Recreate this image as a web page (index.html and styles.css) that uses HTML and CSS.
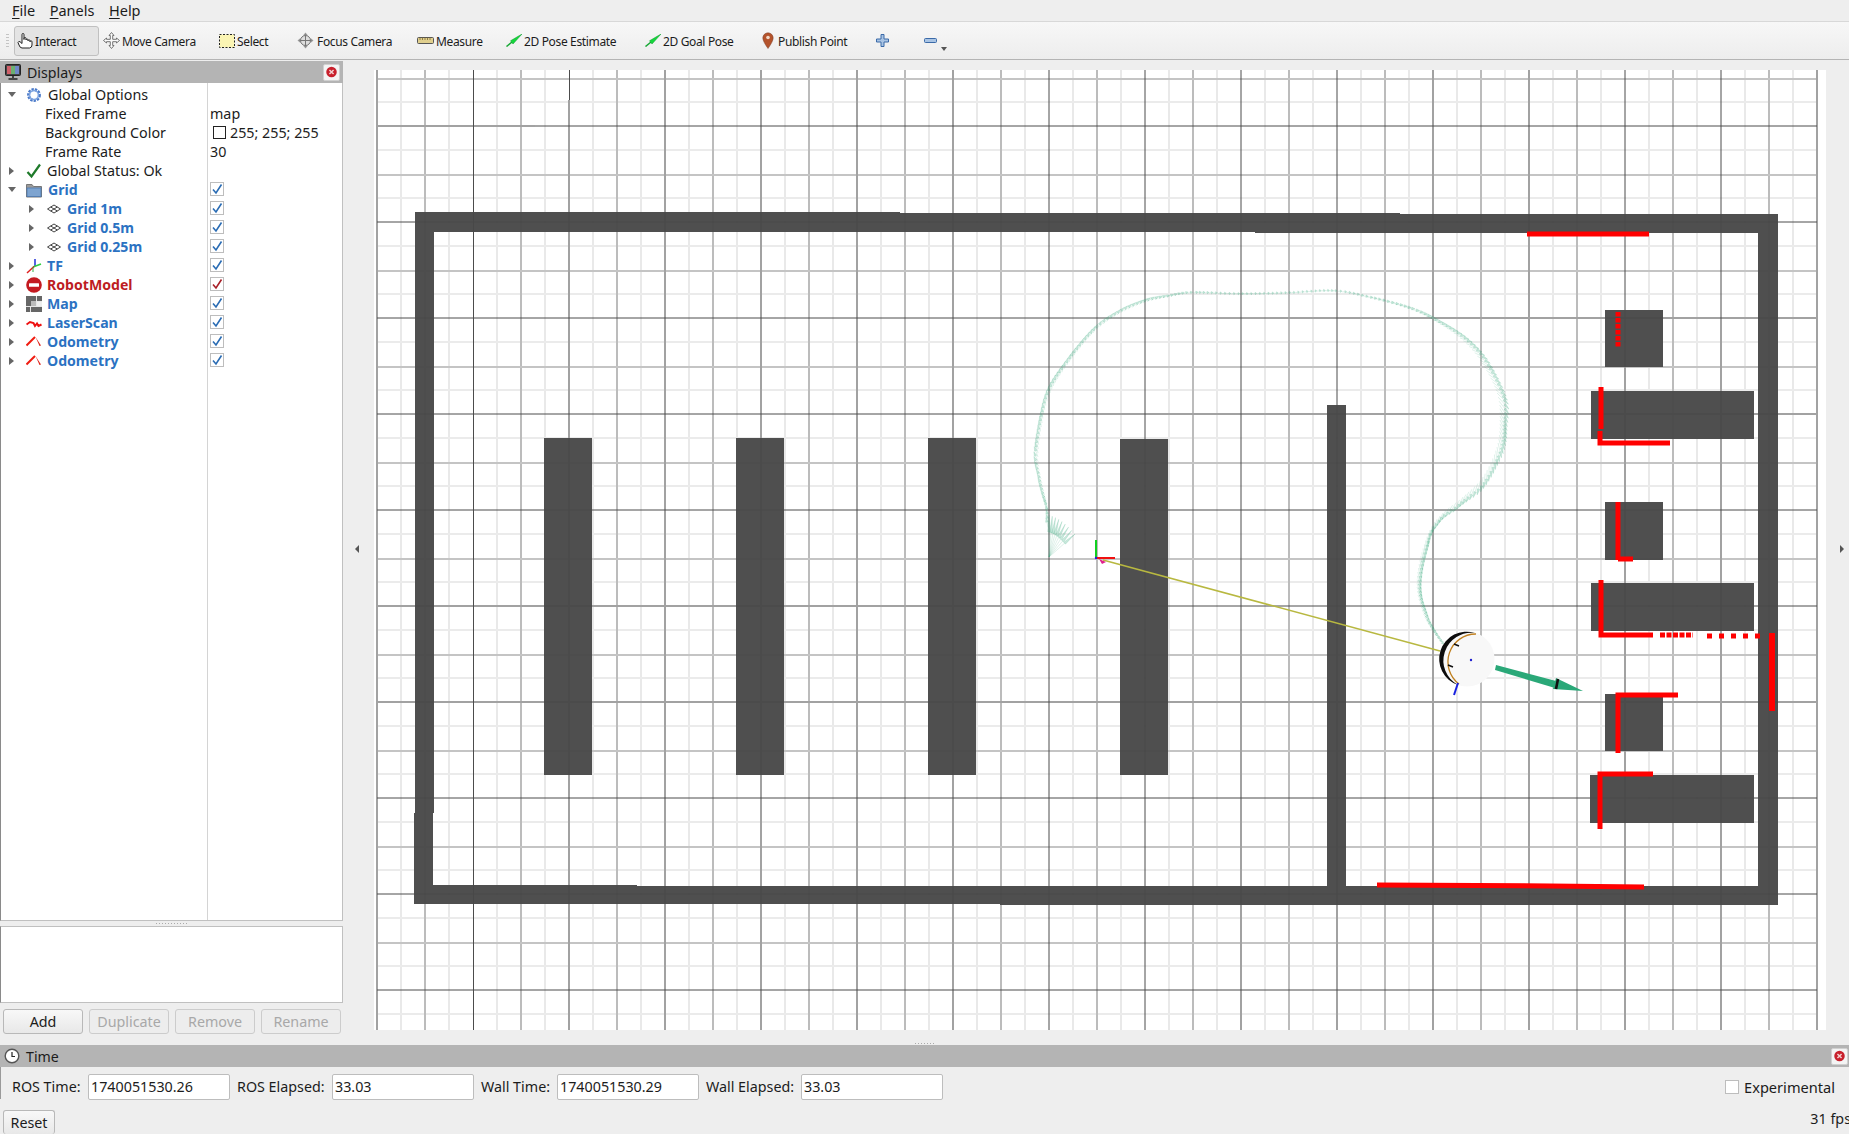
FILE: index.html
```html
<!DOCTYPE html>
<html lang="en">
<head>
<meta charset="utf-8">
<title>RViz</title>
<link rel="stylesheet" href="styles.css">
</head>
<body>
<svg class="defs" width="0" height="0" aria-hidden="true">
  <symbol id="i-check" viewBox="0 0 14 14"><path d="M3 7.500 6 11 11.500 2.500" fill="none" stroke="currentColor" stroke-width="1.600"/></symbol>
  <symbol id="i-close" viewBox="0 0 16 16"><circle cx="8" cy="8" r="5.600" fill="#c8202c"/><path d="M5.800 5.800 10.200 10.200M10.200 5.800 5.800 10.200" stroke="#f3d0d0" stroke-width="1.600"/></symbol>
  <symbol id="i-grid" viewBox="0 0 16 16"><path d="M1.500 8 8 4l6.500 4L8 12ZM4.700 6 11.300 10M11.300 6 4.700 10" fill="#fff" stroke="#444" stroke-width="1"/></symbol>
  <symbol id="i-odom" viewBox="0 0 16 16"><path d="M.5 11.500 9 3" stroke="#f01c10" stroke-width="2" fill="none"/><path d="M9.500 3l5.500 8.500-1.500.5Z" fill="#e02018"/></symbol>
</svg>

<nav class="menubar">
  <span><u>F</u>ile</span>
  <span><u>P</u>anels</span>
  <span><u>H</u>elp</span>
</nav>

<div class="toolbar">
  <span class="grip"></span>
  <div class="tool tool-interact active">
    <svg width="17" height="17" viewBox="0 0 17 17"><path d="M5 9V2.500a1 1 0 0 1 2 0V7.500V6.500a1 1 0 0 1 2 0V8a1 1 0 0 1 2 0v.8a1 1 0 0 1 2 0v1a1 1 0 0 1 2 0V13q0 2.500-2.500 3H5Q3 16 2 13L1 10.500q.5-1.500 2-.8L5 11.500Z" fill="#fff" stroke="#222" stroke-width="1"/></svg>
    <span>Interact</span>
  </div>
  <div class="tool tool-move">
    <svg width="17" height="17" viewBox="0 0 17 17"><path d="M8.500 .5 11 3.500H9.700V7.300H13.500V6L16.500 8.500 13.500 11V9.700H9.700V13.500H11L8.500 16.500 6 13.500H7.300V9.700H3.500V11L.5 8.500 3.500 6V7.300H7.300V3.500H6Z" fill="#fafafa" stroke="#666" stroke-width=".9"/></svg>
    <span>Move Camera</span>
  </div>
  <div class="tool tool-select">
    <svg width="16" height="14" viewBox="0 0 16 14"><rect x=".5" y=".5" width="15" height="13" fill="#fbf5b4" stroke="#222" stroke-dasharray="2 1.500"/></svg>
    <span>Select</span>
  </div>
  <div class="tool tool-focus">
    <svg width="17" height="17" viewBox="0 0 17 17"><path d="M8.500.5 11 3.500H6ZM8.500 16.500 6 13.500H11ZM.5 8.500 3.500 6V11ZM16.500 8.500 13.500 11V6Z" fill="#999"/><circle cx="8.500" cy="8.500" r="5" fill="#ddd" stroke="#777"/><path d="M8.500 2.500V14.500M2.500 8.500H14.500" stroke="#777"/></svg>
    <span>Focus Camera</span>
  </div>
  <div class="tool tool-measure">
    <svg width="17" height="8" viewBox="0 0 17 8"><rect x=".5" y=".5" width="16" height="6" rx="1" fill="#e0cf8e" stroke="#555"/><path d="M3 .5V3M5.500.5V3M8 .5V3M10.500.5V3M13 .5V3" stroke="#7d6b30" stroke-width=".8"/></svg>
    <span>Measure</span>
  </div>
  <div class="tool tool-pose">
    <svg width="16" height="13" viewBox="0 0 16 13"><path d="M.5 12.500 6 8" stroke="#16a834" stroke-width="1.500"/><path d="M16 0 4.500 6.800 7 10Z" fill="#14d83c" stroke="#0c9a2a" stroke-width=".5"/></svg>
    <span>2D Pose Estimate</span>
  </div>
  <div class="tool tool-goal">
    <svg width="16" height="13" viewBox="0 0 16 13"><path d="M.5 12.500 6 8" stroke="#16a834" stroke-width="1.500"/><path d="M16 0 4.500 6.800 7 10Z" fill="#14d83c" stroke="#0c9a2a" stroke-width=".5"/></svg>
    <span>2D Goal Pose</span>
  </div>
  <div class="tool tool-point">
    <svg width="12" height="17" viewBox="0 0 12 17"><path d="M6 16.500Q1 9.500.8 6a5.200 5.200 0 0 1 10.400 0Q11 9.500 6 16.500Z" fill="#b4532c" stroke="#7a3a22" stroke-width=".5"/><circle cx="6" cy="5.500" r="1.800" fill="#f0d8c8"/></svg>
    <span>Publish Point</span>
  </div>
  <div class="tool tool-plus">
    <svg width="13" height="13" viewBox="0 0 13 13"><path d="M5 .5H8V5H12.500V8H8V12.500H5V8H.5V5H5Z" fill="#a9c4e4" stroke="#3b6aa8"/></svg>
  </div>
  <div class="tool tool-minus">
    <svg width="13" height="5" viewBox="0 0 13 5"><rect x=".5" y=".5" width="12" height="4" rx="1" fill="#a9c4e4" stroke="#3b6aa8"/></svg>
    <i class="menu-caret"></i>
  </div>
</div>

<div class="workspace">
  <aside class="displays">
    <header class="dock-title">
      <svg width="16" height="16" viewBox="0 0 16 16"><rect x=".5" y=".5" width="15" height="11" rx="1" fill="#444" stroke="#222"/><rect x="2" y="2" width="4" height="8" fill="#d0606a"/><rect x="6" y="2" width="4" height="8" fill="#6cb070"/><rect x="10" y="2" width="4" height="8" fill="#7088c8"/><path d="M8 12V14M3.500 15H12.500" stroke="#222" stroke-width="1.500"/></svg>
      <span>Displays</span>
      <button class="dock-close"><svg width="16" height="16"><use href="#i-close"/></svg></button>
    </header>

    <div class="tree">
      <div class="row">
        <div class="name"><i class="caret down"></i>
          <svg class="ico" width="16" height="16" viewBox="0 0 16 16"><circle cx="8" cy="8" r="5.400" fill="none" stroke="#4878c8" stroke-width="3" stroke-dasharray="2.200 1"/><circle cx="8" cy="8" r="4.500" fill="none" stroke="#7ea4e0" stroke-width="1.500"/></svg>
          <span class="lbl">Global Options</span></div>
        <div class="val"></div>
      </div>
      <div class="row"><div class="name prop">Fixed Frame</div><div class="val">map</div></div>
      <div class="row"><div class="name prop">Background Color</div><div class="val"><i class="swatch"></i>255; 255; 255</div></div>
      <div class="row"><div class="name prop">Frame Rate</div><div class="val">30</div></div>
      <div class="row">
        <div class="name"><i class="caret"></i>
          <svg class="ico" width="16" height="16" viewBox="0 0 16 16"><path d="M1.500 9 5.500 13.500 14 1.500" fill="none" stroke="#1e7a2a" stroke-width="2.200"/></svg>
          <span class="lbl">Global Status: Ok</span></div>
        <div class="val"></div>
      </div>
      <div class="row on">
        <div class="name"><i class="caret down"></i>
          <svg class="ico" width="16" height="16" viewBox="0 0 16 16"><path d="M.5 2.500H6L7.500 4.500H15.500V15H.5Z" fill="#9a9a9a" stroke="#777"/><rect x="1" y="6" width="14" height="8.500" fill="#7ea4d0" stroke="#4a78b0" stroke-width=".8"/></svg>
          <span class="lbl">Grid</span></div>
        <div class="val"><label class="cb"><svg width="14" height="14"><use href="#i-check"/></svg></label></div>
      </div>
      <div class="row on child">
        <div class="name"><i class="caret"></i><svg class="ico" width="16" height="16"><use href="#i-grid"/></svg><span class="lbl">Grid 1m</span></div>
        <div class="val"><label class="cb"><svg width="14" height="14"><use href="#i-check"/></svg></label></div>
      </div>
      <div class="row on child">
        <div class="name"><i class="caret"></i><svg class="ico" width="16" height="16"><use href="#i-grid"/></svg><span class="lbl">Grid 0.5m</span></div>
        <div class="val"><label class="cb"><svg width="14" height="14"><use href="#i-check"/></svg></label></div>
      </div>
      <div class="row on child">
        <div class="name"><i class="caret"></i><svg class="ico" width="16" height="16"><use href="#i-grid"/></svg><span class="lbl">Grid 0.25m</span></div>
        <div class="val"><label class="cb"><svg width="14" height="14"><use href="#i-check"/></svg></label></div>
      </div>
      <div class="row on">
        <div class="name"><i class="caret"></i>
          <svg class="ico" width="16" height="16" viewBox="0 0 16 16"><path d="M9 8V1" stroke="#2030d8" stroke-width="1.500"/><path d="M7 9 15 6" stroke="#30d040" stroke-width="1.500"/><path d="M8 8.500 1 15" stroke="#e02020" stroke-width="1.500"/><path d="M7 9V14" stroke="#30b040" stroke-width="1"/></svg>
          <span class="lbl">TF</span></div>
        <div class="val"><label class="cb"><svg width="14" height="14"><use href="#i-check"/></svg></label></div>
      </div>
      <div class="row on err">
        <div class="name"><i class="caret"></i>
          <svg class="ico" width="16" height="16" viewBox="0 0 16 16"><circle cx="8" cy="8" r="7.800" fill="#c41a20"/><rect x="3" y="6.300" width="10" height="3.400" rx=".5" fill="#fff"/></svg>
          <span class="lbl">RobotModel</span></div>
        <div class="val"><label class="cb"><svg width="14" height="14"><use href="#i-check"/></svg></label></div>
      </div>
      <div class="row on">
        <div class="name"><i class="caret"></i>
          <svg class="ico" width="16" height="16" viewBox="0 0 16 16"><rect x="0" y="0" width="16" height="16" fill="#e6e6e6"/><path d="M0 0H10V5H5V10H0ZM11 0H16V5H11ZM5 11H16V16H5ZM0 11H4V16H0Z" fill="#666"/><path d="M5 5H10V10H5Z" fill="#bbb"/><path d="M11 6H16V10H11Z" fill="#eee"/></svg>
          <span class="lbl">Map</span></div>
        <div class="val"><label class="cb"><svg width="14" height="14"><use href="#i-check"/></svg></label></div>
      </div>
      <div class="row on">
        <div class="name"><i class="caret"></i>
          <svg class="ico" width="16" height="16" viewBox="0 0 16 16"><path d="M.5 9.500 4 7 7.500 8 9 11 11 8.500 12.500 11 15.500 9.500" fill="none" stroke="#ee1010" stroke-width="2"/></svg>
          <span class="lbl">LaserScan</span></div>
        <div class="val"><label class="cb"><svg width="14" height="14"><use href="#i-check"/></svg></label></div>
      </div>
      <div class="row on">
        <div class="name"><i class="caret"></i><svg class="ico" width="16" height="16"><use href="#i-odom"/></svg><span class="lbl">Odometry</span></div>
        <div class="val"><label class="cb"><svg width="14" height="14"><use href="#i-check"/></svg></label></div>
      </div>
      <div class="row on">
        <div class="name"><i class="caret"></i><svg class="ico" width="16" height="16"><use href="#i-odom"/></svg><span class="lbl">Odometry</span></div>
        <div class="val"><label class="cb"><svg width="14" height="14"><use href="#i-check"/></svg></label></div>
      </div>
    </div>

    <div class="grip-h"></div>
    <div class="help-box"></div>

    <div class="dock-buttons">
      <button class="btn">Add</button>
      <button class="btn off">Duplicate</button>
      <button class="btn off">Remove</button>
      <button class="btn off">Rename</button>
    </div>
  </aside>

  <div class="view">
    <i class="side-arrow left"></i>
    <svg class="scene" width="1452" height="960" viewBox="374 70 1452 960">
      <defs>
        <pattern id="v-light" x="377" y="70" width="48" height="960" patternUnits="userSpaceOnUse"><rect x="23" width="2" height="960" fill="#e9e9e9"/></pattern>
        <pattern id="v-mid" x="377" y="70" width="96" height="960" patternUnits="userSpaceOnUse"><rect x="47" width="2" height="960" fill="#bcbcbc"/></pattern>
        <pattern id="h-light" x="377" y="78" width="1441" height="48" patternUnits="userSpaceOnUse"><rect y="23" width="1441" height="2" fill="#ebebeb"/></pattern>
        <pattern id="h-mid" x="377" y="78" width="1441" height="96" patternUnits="userSpaceOnUse"><rect y="0" width="1441" height="2" fill="#c4c4c4"/></pattern>
      </defs>
      <rect x="374" y="70" width="1452" height="960" fill="#fff"/>
      <rect x="377" y="70" width="1441" height="960" fill="url(#v-light)"/>
      <rect x="377" y="78" width="1441" height="937" fill="url(#h-light)"/>
      <rect x="377" y="70" width="1441" height="960" fill="url(#v-mid)"/>
      <rect x="377" y="78" width="1441" height="937" fill="url(#h-mid)"/>

      <path class="major-g" d="M377 70V1030M569 100V1030M665 70V1030M761 70V1030M857 70V1030M953 70V1030M1433 70V1030M1529 70V1030M1625 350V1030M1721 320V1030M1817 70V1030M1337 620V1030M1241 650V1030"/>
      <path class="major-g" d="M377 126H535M1270 318H1817M1100 414H1817M1330 510H1540M377 606H1140M377 702H1817"/>
      <path class="major-d" d="M473.500 70V1030M569.500 70V100M1049 70V1030M1145 70V1030M1241 70V650M1337 70V620M1625 70V350M1721 70V320"/>
      <path class="major-d" d="M535 126H1817M377 222H1817M377 318H1270M377 414H1100M377 510H1330M1540 510H1817M1140 606H1817M377 798H1817M377 894H1817M377 990H1817"/>

      <g class="map" shape-rendering="crispEdges">
        <path fill-rule="evenodd" d="M415 212H900V213H1400V214H1778V905H1000V904H414V813H415ZM434 232V813H433V885H637V886H1758V233H1255V232Z"/>
        <rect x="544" y="438" width="48" height="337"/>
        <rect x="736" y="438" width="48" height="337"/>
        <rect x="928" y="438" width="48" height="337"/>
        <rect x="1120" y="439" width="48" height="336"/>
        <rect x="1327" y="405" width="19" height="481"/>
        <rect x="1605" y="310" width="58" height="57"/>
        <rect x="1591" y="391" width="163" height="48"/>
        <rect x="1605" y="502" width="58" height="58"/>
        <rect x="1591" y="583" width="163" height="48"/>
        <rect x="1605" y="694" width="58" height="57"/>
        <rect x="1590" y="775" width="164" height="48"/>
      </g>

      <g class="scan">
        <path d="M1527 234H1649"/>
        <path d="M1618 312V347" stroke-dasharray="4.500 1.500"/>
        <path d="M1601 387V429M1600 431V443H1670"/>
        <path d="M1618 502V560M1618 559H1633"/>
        <path d="M1601 580V635H1653"/>
        <path d="M1660 635H1693" stroke-dasharray="5 1.500"/>
        <path d="M1707 636H1760" stroke-dasharray="5 7"/>
        <path class="scan-wide" d="M1772 633V711"/>
        <path d="M1678 695H1618V753"/>
        <path d="M1653 774H1600V829"/>
        <path d="M1377 885 1550 886 1644 887"/>
      </g>

      <path class="tf-line" d="M1103 560 1440 651"/>
      <path d="M1096 558V540" stroke="#10d020" stroke-width="2"/>
      <path d="M1096 558H1115" stroke="#f01010" stroke-width="2"/>
      <path d="M1099 559 1106 562 1102 564Z" fill="#e0208c"/>
      <circle cx="1096" cy="558" r="1.200" fill="#2020e0"/>

      <g id="odom-arrows"></g>

      <circle cx="1467" cy="659" r="27.500" fill="#f8f8f8"/>
      <path d="M1477 633A27.200 27.200 0 0 0 1460 685A27.800 27.800 0 0 1 1477 633Z" fill="#0c0c0c" transform="translate(-2 0)"/>
      <path d="M1476 634A27.800 27.800 0 0 0 1459 684" fill="none" stroke="#c08020" stroke-width="1.300"/>
      <path d="M1454 644 1459 646M1448 665 1453 667" stroke="#111" stroke-width="1.500"/>
      <circle cx="1471" cy="660" r="1.200" fill="#2020d0"/>
      <path d="M1458 683 1454 695" stroke="#1820e0" stroke-width="2"/>
      <path d="M1496 665 1556 681 1555 688 1495 670Z" fill="#2aa878"/>
      <path d="M1556 678 1583 691 1553 689Z" fill="#2aa878"/>
      <path d="M1558 679 1556 689" stroke="#111" stroke-width="2.600"/>
    </svg>
    <i class="side-arrow right"></i>
  </div>
</div>

<div class="grip-bottom"></div>

<section class="time-panel">
  <header class="dock-title time-title">
    <svg width="16" height="16" viewBox="0 0 16 16"><circle cx="8" cy="8" r="6.800" fill="#fff" stroke="#555" stroke-width="1.400"/><path d="M8 4V8.500H11" fill="none" stroke="#222" stroke-width="1.200"/></svg>
    <span>Time</span>
    <button class="dock-close"><svg width="16" height="16"><use href="#i-close"/></svg></button>
  </header>
  <div class="time-row">
    <span class="t-label">ROS Time:</span><span class="field">1740051530.26</span>
    <span class="t-label">ROS Elapsed:</span><span class="field">33.03</span>
    <span class="t-label">Wall Time:</span><span class="field">1740051530.29</span>
    <span class="t-label">Wall Elapsed:</span><span class="field">33.03</span>
    <span class="experimental"><i class="swatch big"></i>Experimental</span>
  </div>
  <div class="status-row">
    <button class="btn reset">Reset</button>
    <span class="fps">31 fps</span>
  </div>
</section>
<script src="scene.js"></script>
</body>
</html>
```

FILE: styles.css
```css
* { box-sizing: border-box; }
html, body { margin: 0; height: 100%; }
body {
  width: 1849px;
  height: 1134px;
  overflow: hidden;
  background: #eeeeee;
  color: #1c1c1c;
  font-family: "Noto Sans", "Open Sans", sans-serif;
  font-size: 14.3px;
}
.defs { position: absolute; }
u { text-underline-offset: 2px; }

.menubar {
  height: 22px;
  display: flex;
  align-items: center;
  gap: 14.5px;
  padding: 0 0 2px 12px;
  background: #eeeeee;
  font-size: 14.5px;
  border-bottom: 1px solid #d8d8d8;
}

.toolbar {
  height: 38px;
  display: flex;
  align-items: center;
  padding-left: 14px;
  background: linear-gradient(#f7f7f7, #ededed);
  border-bottom: 1px solid #b4b4b4;
  font-size: 12px;
  letter-spacing: -.35px;
  position: relative;
}
.grip {
  width: 3px;
  height: 14px;
  margin-left: -8px;
  margin-right: 5px;
  background: repeating-linear-gradient(#c4c4c4 0 1px, transparent 1px 3px);
}
.tool {
  display: flex;
  align-items: center;
  gap: 2px;
  height: 30px;
  flex: none;
}
.tool span { padding-top: 2px; }
.tool svg { flex: none; }
.tool.active {
  background: #e4e4e4;
  border: 1px solid #c0c0c0;
  border-radius: 3px;
}
.tool-interact { width: 85px; padding-left: 2px; gap: 1px; }
.tool-move { width: 118px; padding-left: 4px; }
.tool-select { width: 78px; padding-left: 2px; }
.tool-focus { width: 120px; padding-left: 2px; gap: 3px; }
.tool-measure { width: 91px; padding-left: 2px; }
.tool-pose { width: 139px; padding-left: 0; }
.tool-goal { width: 117px; padding-left: 0; }
.tool-point { width: 114px; padding-left: 0; gap: 4px; }
.tool-plus { width: 48px; }
.tool-minus { width: 30px; position: relative; }
.menu-caret {
  position: absolute;
  left: 17px;
  top: 21px;
  border: 3px solid transparent;
  border-top: 4px solid #555;
  border-bottom: 0;
}

.workspace {
  height: 981px;
  display: flex;
  padding-top: 1px;
}
.displays {
  width: 343px;
  flex: none;
  display: flex;
  flex-direction: column;
}
.dock-title {
  height: 22px;
  flex: none;
  background: #b4b4b4;
  display: flex;
  align-items: center;
  gap: 3px;
  padding-left: 5px;
  font-size: 14.2px;
}
.dock-title span { padding-left: 3px; }
.dock-close {
  margin-left: auto;
  margin-right: 3px;
  width: 17px;
  height: 17px;
  padding: 0;
  border: 1px solid #d0d0d0;
  border-radius: 2px;
  background: #f4f4f4;
  display: flex;
  align-items: center;
  justify-content: center;
}
.tree {
  height: 838px;
  flex: none;
  background: linear-gradient(90deg, transparent 206px, #d4d4d4 206px 207px, transparent 207px) #fff;
  border: 1px solid #c0c0c0;
  border-top: 0;
  border-left-color: #8a8a8a;
  overflow: hidden;
}
.row {
  display: grid;
  grid-template-columns: 207px 1fr;
  height: 19px;
  line-height: 19px;
  white-space: nowrap;
}
.row:first-child { margin-top: 1px; }
.name {
  display: flex;
  align-items: center;
  padding-left: 7px;
  padding-top: 1px;
}
.name.prop { padding-left: 44px; }
.child .name { padding-left: 27px; }
.caret {
  width: 0;
  height: 0;
  margin-right: 12px;
  margin-left: 1px;
  flex: none;
  border-style: solid;
  border-width: 4px 0 4px 5px;
  border-color: transparent transparent transparent #666;
}
.caret.down {
  margin-left: 0;
  margin-right: 10px;
  border-width: 5px 4px 0 4px;
  border-color: #666 transparent transparent;
}
.ico { flex: none; margin-right: 5px; }
.caret.down + .ico { margin-right: 6px; }
.on .lbl {
  font-weight: 700;
  color: #2b72c2;
  font-size: 14.1px;
}
.err .lbl { color: #bd1c22; }
.val {
  padding-left: 2px;
  padding-top: 1px;
  display: flex;
  align-items: center;
}
.cb {
  width: 14px;
  height: 14px;
  margin-top: -1px;
  background: #fff;
  border: 1px solid #bdbdbd;
  color: #2a6cb4;
  display: flex;
  align-items: center;
  justify-content: center;
}
.err .cb { color: #a82028; }
.cb svg { flex: none; }
.swatch {
  width: 13px;
  height: 13px;
  border: 1px solid #222;
  background: #fff;
  margin: 0 4px 0 3px;
  flex: none;
}
.swatch.big {
  width: 14px;
  height: 14px;
  border-color: #bdbdbd;
  margin: 0 5px 0 0;
}
.grip-h {
  height: 5px;
  flex: none;
  background: radial-gradient(circle, #aaa .5px, transparent 1px) center / 3px 3px repeat-x;
  background-size: 3px 3px;
  margin: 0 156px;
}
.help-box {
  height: 77px;
  flex: none;
  background: #fff;
  border: 1px solid #c0c0c0;
  border-left-color: #8a8a8a;
}
.dock-buttons {
  display: flex;
  gap: 6px;
  padding: 6px 2px 0 3px;
}
.btn {
  flex: 1;
  height: 25px;
  padding: 0;
  font: inherit;
  color: #1c1c1c;
  border: 1px solid #b8b8b8;
  border-radius: 3px;
  background: linear-gradient(#f8f8f8, #e8e8e8);
}
.btn.off {
  color: #a8a8a8;
  border-color: #cccccc;
  background: #ededed;
}

.view {
  flex: 1;
  display: flex;
  align-items: flex-start;
  padding: 9px 0 0 31px;
  position: relative;
}
.scene { flex: none; display: block; }
.side-arrow {
  position: absolute;
  top: 484px;
  border-style: solid;
  border-color: transparent;
}
.side-arrow.left { left: 12px; border-width: 4px 4px 4px 0; border-right-color: #555; }
.side-arrow.right { right: 5px; border-width: 4px 0 4px 4px; border-left-color: #555; }

.major-g { stroke: #a2a2a2; stroke-width: 2; fill: none; }
.major-d { stroke: #4c4c4c; stroke-width: 1; fill: none; }
.map { fill: #484848; fill-opacity: .96; }
.scan { fill: none; stroke: #ff0000; stroke-width: 5; }
.scan-wide { stroke-width: 6; }
.tf-line { stroke: #b8b840; stroke-width: 1.500; fill: none; }
.pose {
  fill: #2fa578;
  fill-opacity: .26;
  stroke: #2fa578;
  stroke-width: .6;
  stroke-opacity: .26;
}

.grip-bottom {
  height: 4px;
  background: radial-gradient(circle, #aaa .5px, transparent 1px) center / 3px 3px repeat-x;
  margin: 0 915px;
}
.time-panel { display: flex; flex-direction: column; }
.time-title { padding-left: 4px; }
.time-title .dock-close { margin-right: 1px; }
.time-row {
  height: 32px;
  display: flex;
  align-items: center;
  padding: 7px 6px 0 11px;
  border-left: 1px solid #9a9a9a;
}
.t-label { width: 76px; flex: none; white-space: nowrap; }
.t-label:nth-child(3) { width: 95px; }
.t-label:nth-child(5) { width: 76px; }
.t-label:nth-child(7) { width: 95px; }
.field {
  width: 142px;
  height: 26px;
  flex: none;
  margin-right: 7px;
  padding-left: 2px;
  line-height: 23px;
  background: #fff;
  border: 1px solid #bdbdbd;
  border-radius: 2px;
}
.experimental {
  margin-left: auto;
  display: flex;
  align-items: center;
  padding-right: 8px;
  font-size: 14.6px;
}
.status-row {
  display: flex;
  justify-content: space-between;
  align-items: flex-end;
  height: 35px;
  padding: 11px 0 0 3px;
}
.btn.reset { flex: none; width: 52px; height: 24px; border-bottom: 0; }
.fps { padding-bottom: 6px; white-space: nowrap; margin-right: -2px; }
```

FILE: scene.js
```js
// Draws the odometry trail: one thin pose arrow per sample along the recorded path.
(function () {
  var NS = "http://www.w3.org/2000/svg";
  var group = document.getElementById("odom-arrows");

  // x, y, arrow length
  var track = [
    [1048, 530, 9], [1048, 510, 10], [1042, 483, 10], [1038, 457, 11], [1042, 423, 11],
    [1050, 393, 11], [1067, 365, 11], [1093, 333, 10], [1117, 315, 10], [1143, 303, 9],
    [1167, 297, 7], [1193, 293, 5], [1240, 294, 4], [1287, 293, 4], [1333, 291, 4],
    [1367, 297, 6], [1407, 308, 8], [1433, 320, 10], [1460, 338, 13], [1480, 360, 15],
    [1497, 393, 16], [1500, 420, 16], [1497, 447, 15], [1483, 477, 15], [1463, 497, 14],
    [1443, 513, 14], [1430, 530, 14], [1420, 560, 14], [1417, 587, 14], [1422, 610, 12],
    [1430, 627, 10], [1441, 642, 5]
  ];
  var fanOrigin = [1049, 557];
  var fanFrom = [1049, 515], fanTo = [1075, 534], FAN_COUNT = 9;

  function arrow(x, y, dx, dy, len) {
    var tx = x + dx * len, ty = y + dy * len;
    var bx = x + dx * len * 0.6, by = y + dy * len * 0.6;
    var w = 1.3;
    var d = "M" + x + " " + y + "L" + bx + " " + by +
      "M" + (bx - dy * w) + " " + (by + dx * w) +
      "L" + tx + " " + ty +
      "L" + (bx + dy * w) + " " + (by - dx * w) + "Z";
    var p = document.createElementNS(NS, "path");
    p.setAttribute("class", "pose");
    p.setAttribute("d", d);
    group.appendChild(p);
  }

  for (var f = 0; f < FAN_COUNT; f++) {
    var q = f / (FAN_COUNT - 1);
    var fx = fanFrom[0] + (fanTo[0] - fanFrom[0]) * q - fanOrigin[0];
    var fy = fanFrom[1] + (fanTo[1] - fanFrom[1]) * q - fanOrigin[1] - 3 * Math.sin(q * Math.PI);
    var fl = Math.hypot(fx, fy);
    arrow(fanOrigin[0], fanOrigin[1], fx / fl, fy / fl, fl);
  }

  // Catmull-Rom interpolation keeps the trail smooth between the recorded points.
  function cr(a, b, c, d, t) {
    return 0.5 * (2 * b + (c - a) * t + (2 * a - 5 * b + 4 * c - d) * t * t + (3 * b - a - 3 * c + d) * t * t * t);
  }

  var STEP = 4.5;
  var prev = null;
  for (var i = 0; i < track.length - 1; i++) {
    var p0 = track[Math.max(i - 1, 0)], p1 = track[i], p2 = track[i + 1], p3 = track[Math.min(i + 2, track.length - 1)];
    var count = Math.ceil(Math.hypot(p2[0] - p1[0], p2[1] - p1[1]) / STEP);
    for (var n = 0; n < count; n++) {
      var t = n / count;
      var x = cr(p0[0], p1[0], p2[0], p3[0], t);
      var y = cr(p0[1], p1[1], p2[1], p3[1], t);
      if (prev) {
        var ux = x - prev[0], uy = y - prev[1];
        var ul = Math.hypot(ux, uy) || 1;
        ux /= ul; uy /= ul;
        var len = p1[2] + (p2[2] - p1[2]) * t;
        var tilt = -0.028 * len;
        var c = Math.cos(tilt), s = Math.sin(tilt);
        arrow(x, y, ux * c - uy * s, ux * s + uy * c, len);
      }
      prev = [x, y];
    }
  }
})();
```
